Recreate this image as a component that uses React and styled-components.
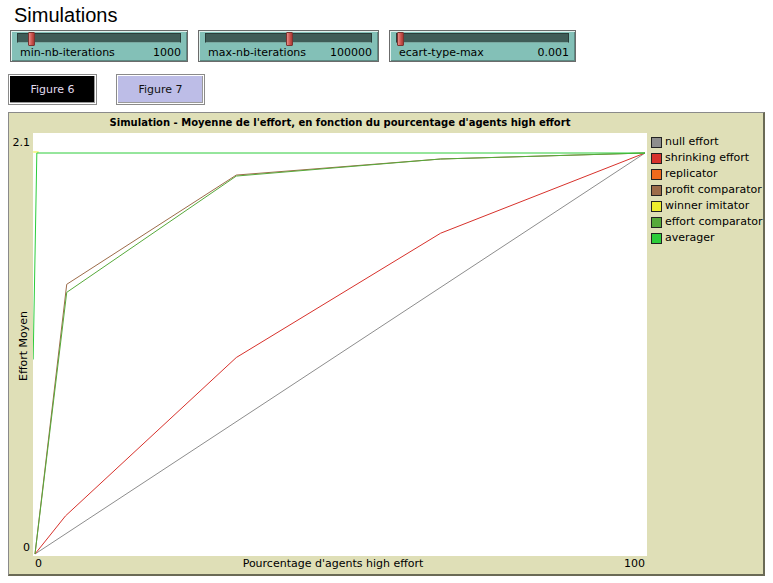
import React from 'react';
import styled, {createGlobalStyle} from "styled-components";

const GlobalStyle = createGlobalStyle`
    body {
        margin: 0;
        background: #fff;
        font-family: "DejaVu Sans", "Liberation Sans", sans-serif;
        color: #000;
    }
`;

const Page = styled.div`
    width: 773px;
    height: 583px;
    padding: 3px 8px 0 8px;
    box-sizing: border-box;
`;

const Title = styled.h1`
    margin: 0 0 0 6px;
    font-family: "Liberation Sans", sans-serif;
    font-size: 20px;
    font-weight: normal;
    line-height: 24px;
`;

const SliderRow = styled.div`
    display: flex;
    gap: 10px;
    margin: 3px 0 0 2px;
`;

const SliderFrame = styled.div`
    width: ${p => p.width}px;
    height: 32px;
    box-sizing: border-box;
    background: #83c0b7;
    border: 1px solid #6b6b6b;
    box-shadow: inset 1px 1px 0 #dff0ec, inset -1px -1px 0 #5c8a83;
    padding: 2px 6px 0 6px;
    display: flex;
    flex-direction: column;
`;

const Track = styled.div`
    position: relative;
    height: 10px;
    background: #3f5c57;
    border: 1px solid #2a3d3a;
    border-bottom-color: #7aa9a1;
`;

const Thumb = styled.div`
    position: absolute;
    top: -2px;
    width: 7px;
    height: 14px;
    box-sizing: border-box;
    background: linear-gradient(90deg, #e58c88, #c9504a 60%, #a83c37);
    border: 1px solid #7a3330;
    border-radius: 1px;
`;

const SliderText = styled.div`
    display: flex;
    justify-content: space-between;
    font-size: 11px;
    line-height: 16px;
    margin-top: 2px;
    padding: 0 0 0 3px;
`;

const ButtonRow = styled.div`
    display: flex;
    gap: 19px;
    margin-top: 12px;
`;

const FigureButton = styled.div`
    width: 89px;
    height: 31px;
    box-sizing: border-box;
    border: 1px solid #8a8a8a;
    box-shadow: inset 0 0 0 1px #fff, inset -1px -1px 0 1px #9a9a9a;
    background: ${p => p.active ? '#000' : '#bdbde7'};
    color: ${p => p.active ? '#e2dcef' : '#111'};
    font-size: 11px;
    display: flex;
    align-items: center;
    justify-content: center;
`;

const PlotPanel = styled.div`
    margin-top: 7px;
    width: 757px;
    height: 464px;
    box-sizing: border-box;
    background: #dfdfb7;
    border: 1px solid #8a8a8a;
    border-right: 2px solid #6a6a55;
    border-bottom: 2px solid #6a6a55;
    display: grid;
    grid-template-columns: 24px 614px 1fr;
    grid-template-rows: 20px 423px 18px;
`;

const PlotTitle = styled.div`
    grid-column: 1 / 3;
    text-align: center;
    font-size: 10px;
    font-weight: bold;
    line-height: 20px;
    padding-left: 24px;
`;

const YAxis = styled.div`
    position: relative;
    font-size: 11px;
`;

const YTick = styled.span`
    position: absolute;
    right: 3px;
    top: ${p => p.top}px;
`;

const YLabel = styled.span`
    position: absolute;
    left: 14px;
    top: 213px;
    transform: translate(-50%, -50%) rotate(-90deg);
    white-space: nowrap;
    font-size: 11px;
`;

const PlotArea = styled.div`
    background: #fff;
`;

const Legend = styled.div`
    grid-row: 1 / 4;
    grid-column: 3;
    padding: 23px 0 0 4px;
    display: flex;
    flex-direction: column;
    gap: 4px;
`;

const LegendItem = styled.div`
    display: flex;
    align-items: center;
    gap: 3px;
    font-size: 11px;
    line-height: 12px;
    white-space: nowrap;
`;

const Swatch = styled.span`
    width: 11px;
    height: 11px;
    box-sizing: border-box;
    border: 1px solid #222;
    background: ${p => p.color};
`;

const XAxis = styled.div`
    grid-column: 2;
    display: flex;
    justify-content: space-between;
    font-size: 11px;
    line-height: 16px;
    padding: 0 2px 0 2px;
`;

const sliders = [
    {name: 'min-nb-iterations', value: '1000', width: 178, pos: 10},
    {name: 'max-nb-iterations', value: '100000', width: 181, pos: 80},
    {name: 'ecart-type-max', value: '0.001', width: 187, pos: 0},
];

const series = [
    {name: 'null effort', color: '#8d8d8d', pts: [[0, 0], [100, 2]]},
    {name: 'shrinking effort', color: '#d7312b', pts: [[0, 0], [5, 0.19], [33, 0.98], [66.5, 1.6], [100, 2]]},
    {name: 'replicator', color: '#f06a1c', pts: []},
    {name: 'profit comparator', color: '#9c6b49', pts: [[0, 0], [5.2, 1.345], [33, 1.89], [66.5, 1.97], [100, 2]]},
    {name: 'winner imitator', color: '#eded2c', pts: [[-0.3, 2.005], [0.6, 2.005]]},
    {name: 'effort comparator', color: '#56a93a', pts: [[0, 0], [5.2, 1.305], [33, 1.885], [66.5, 1.97], [100, 2]]},
    {name: 'averager', color: '#2ccc3a', pts: [[-0.3, 0.97], [0.3, 2], [100, 2]]},
];

const W = 614;
const H = 423;
const px = x => 2 + x * 6.1;
const py = y => 421 - y * 200.5;

function Chart() {
    return (
        <svg width={W} height={H} style={{display: 'block'}}>
            {series.filter(s => s.pts.length).map(s => (
                <polyline
                    key={s.name}
                    fill="none"
                    stroke={s.color}
                    strokeWidth="1"
                    points={s.pts.map(([x, y]) => `${px(x)},${py(y)}`).join(' ')}
                />
            ))}
        </svg>
    );
}

export default function App() {
    return (
        <Page>
            <GlobalStyle/>
            <Title>Simulations</Title>
            <SliderRow>
                {sliders.map(s => (
                    <SliderFrame key={s.name} width={s.width}>
                        <Track>
                            <Thumb style={{left: `${s.pos}px`}}/>
                        </Track>
                        <SliderText>
                            <span>{s.name}</span>
                            <span>{s.value}</span>
                        </SliderText>
                    </SliderFrame>
                ))}
            </SliderRow>
            <ButtonRow>
                <FigureButton active>Figure 6</FigureButton>
                <FigureButton>Figure 7</FigureButton>
            </ButtonRow>
            <PlotPanel>
                <PlotTitle>Simulation - Moyenne de l'effort, en fonction du pourcentage d'agents high effort</PlotTitle>
                <YAxis>
                    <YTick top={3}>2.1</YTick>
                    <YTick top={408}>0</YTick>
                    <YLabel>Effort Moyen</YLabel>
                </YAxis>
                <PlotArea>
                    <Chart/>
                </PlotArea>
                <Legend>
                    {series.map(s => (
                        <LegendItem key={s.name}>
                            <Swatch color={s.color}/>
                            {s.name}
                        </LegendItem>
                    ))}
                </Legend>
                <div/>
                <XAxis>
                    <span>0</span>
                    <span>Pourcentage d'agents high effort</span>
                    <span>100</span>
                </XAxis>
            </PlotPanel>
        </Page>
    );
}
